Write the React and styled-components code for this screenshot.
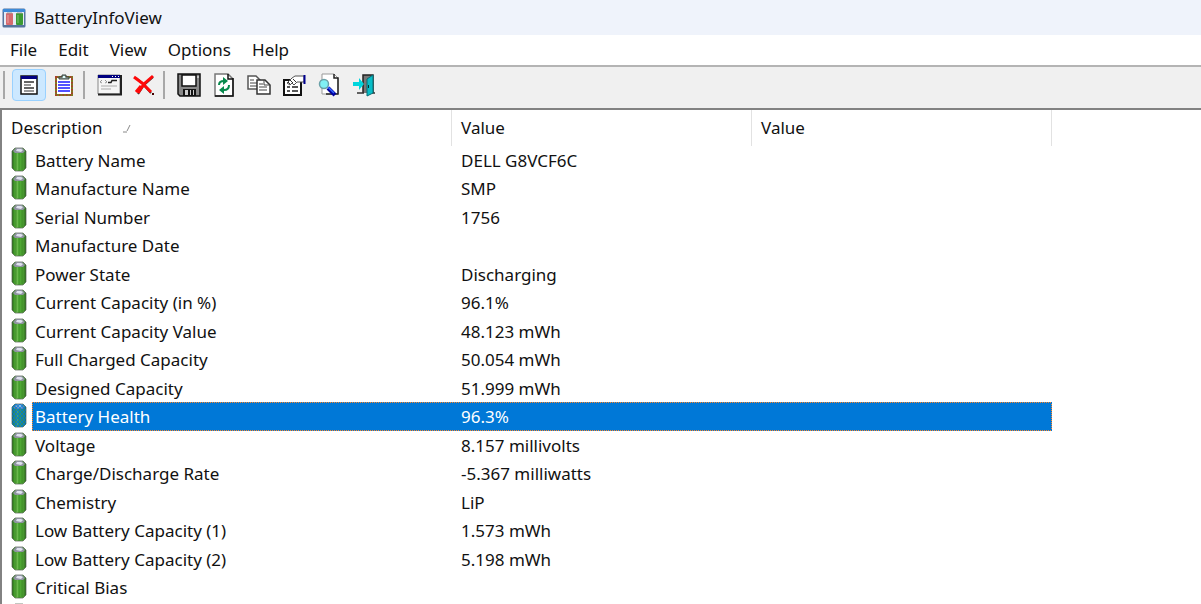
import React from "react";
import styled, { createGlobalStyle, css } from "styled-components";

const rows = [
  ["Battery Name", "DELL G8VCF6C"],
  ["Manufacture Name", "SMP"],
  ["Serial Number", "1756"],
  ["Manufacture Date", ""],
  ["Power State", "Discharging"],
  ["Current Capacity (in %)", "96.1%"],
  ["Current Capacity Value", "48.123 mWh"],
  ["Full Charged Capacity", "50.054 mWh"],
  ["Designed Capacity", "51.999 mWh"],
  ["Battery Health", "96.3%"],
  ["Voltage", "8.157 millivolts"],
  ["Charge/Discharge Rate", "-5.367 milliwatts"],
  ["Chemistry", "LiP"],
  ["Low Battery Capacity (1)", "1.573 mWh"],
  ["Low Battery Capacity (2)", "5.198 mWh"],
  ["Critical Bias", ""],
  ["", ""],
];

const selected = "Battery Health";

const GlobalStyle = createGlobalStyle`
  * {
    box-sizing: border-box;
  }
  body {
    margin: 0;
    overflow: hidden;
    background: #fff;
    color: #111;
    font-family: "Noto Sans", "Open Sans", sans-serif;
    font-size: 17px;
  }
`;

const BatteryIcon = ({ active }) => (
  <svg width="16" height="25" viewBox="0 0 16 25" aria-hidden="true">
    <defs>
      <linearGradient id="cell">
        <stop offset="0" stopColor="#2c6a1c" />
        <stop offset="0.15" stopColor="#3d9426" />
        <stop offset="0.35" stopColor="#7cc75c" />
        <stop offset="0.5" stopColor="#3f9a28" />
        <stop offset="0.7" stopColor="#5cb43e" />
        <stop offset="1" stopColor="#2c6a1c" />
      </linearGradient>
      <pattern id="dither" width="4" height="4" patternUnits="userSpaceOnUse">
        <path d="M0 0h2v2H0zM2 2h2v2H2z" fill="#0078d7" />
      </pattern>
    </defs>
    <path d="M1 4l3-3h8l3 3v17l-3 3H4l-3-3z" fill="url(#cell)" stroke="#52604e" strokeWidth="0.700" />
    <path d="M5 5v18M11 5v18" stroke="#2d7a1a" strokeWidth="0.800" />
    <path d="M2 4l3-3h6l3 3-2 2H4z" fill="#8f93a0" />
    <path d="M5 4l1-2h4l2 1-2 2z" fill="#dfe1ee" />
    {active && (
      <>
        <path d="M1 4l3-3h8l3 3v17l-3 3H4l-3-3z" fill="#0078d7" opacity="0.4" />
        <path d="M1 4l3-3h8l3 3v17l-3 3H4l-3-3z" fill="url(#dither)" opacity="0.7" />
      </>
    )}
  </svg>
);

const AppIcon = () => (
  <svg width="24" height="20" viewBox="0 0 24 20" aria-hidden="true">
    <rect x="0.500" y="0.500" width="23" height="19" rx="1.500" fill="#56749e" />
    <path d="M1 1h22v3H1z" fill="#3d8ad8" />
    <path d="M2 4h20v13H2z" fill="#e6ecf6" />
    <rect x="4" y="5" width="7" height="12" rx="1" fill="#d66a6e" />
    <rect x="14" y="5" width="7" height="12" rx="1" fill="#3b9a32" />
    <path d="M5 5h5M15 5h5" stroke="#999" />
    <path d="M6 7v8" stroke="#eda0a0" />
    <path d="M16 7v8" stroke="#7cc670" />
  </svg>
);

const PropertiesIcon = () => (
  <svg width="18" height="20" viewBox="0 0 18 20" aria-hidden="true">
    <path d="M1 1h16v18H1z" fill="#fff" stroke="#111" strokeWidth="1.500" />
    <path d="M1 1h16v3H1z" fill="#000080" />
    <path d="M4 7h10M4 13h10" stroke="#333" strokeWidth="1.500" />
    <path d="M4 10h7M4 16h10" stroke="#777" strokeWidth="1.500" />
  </svg>
);

const ClipboardIcon = () => (
  <svg width="20" height="22" viewBox="0 0 20 22" aria-hidden="true">
    <path d="M2 3h16v18H2z" fill="#fff" stroke="#7d7a20" strokeWidth="2" />
    <path d="M2 3h16v18H2z" fill="none" stroke="#a8402c" strokeWidth="2" strokeDasharray="1.500 2" />
    <path d="M4 8h12M4 11h12M4 14h12M4 17h12" stroke="#1818ff" strokeWidth="1.500" />
    <path d="M5 5V3h3V1h4v2h3v2z" fill="#9ba9a3" stroke="#37443f" />
    <path d="M9 2h2v2H9z" fill="#dfffff" />
  </svg>
);

const WindowIcon = () => (
  <svg width="25" height="22" viewBox="0 0 25 22" aria-hidden="true">
    <path d="M1 1h22v19H1z" fill="#f6f6f6" stroke="#888" />
    <path d="M1 20.500h23V1" fill="none" stroke="#222" strokeWidth="2" />
    <path d="M1 1h22v3H1z" fill="#000080" />
    <path d="M15 2.500h1M18 2.500h1M21 2.500h1" stroke="#fff" />
    <path d="M5 6L3 8l2 1M8 6l2 2-2 1" fill="none" stroke="#999" />
    <path d="M20 6.500h-5l-1 2h-3" fill="none" stroke="#222" strokeWidth="1.500" />
    <path d="M4 12h16M4 15h10" stroke="#aaa" />
  </svg>
);

const DeleteIcon = () => (
  <svg width="22" height="22" viewBox="0 0 22 22" aria-hidden="true">
    <path d="M3 4l7 6 8 9M20 3l-9 8-6 9" fill="none" stroke="#333" strokeWidth="2" />
    <path d="M1 3l8 6 9 9M20 2l-9 8-6 9" fill="none" stroke="#ff0808" strokeWidth="3" />
    <path d="M3 18l5-6" stroke="#ff0808" strokeWidth="3" />
    <path d="M19 19h2v2h-2z" fill="#400" />
  </svg>
);

const SaveIcon = () => (
  <svg width="24" height="24" viewBox="0 0 24 24" aria-hidden="true">
    <path d="M1 1h22v22H3l-2-2z" fill="#888" stroke="#111" strokeWidth="1.500" />
    <path d="M5 2h14v11H5z" fill="#fff" stroke="#111" strokeWidth="1.500" />
    <path d="M6 16h13v7H6z" fill="#111" />
    <path d="M8 17h3v5H8zM13 17h1v5h-1zM16 17h1v5h-1z" fill="#ccc" />
    <path d="M20.500 3h1v2h-1z" fill="#fff" />
  </svg>
);

const RefreshIcon = () => (
  <svg width="20" height="24" viewBox="0 0 20 24" aria-hidden="true">
    <path d="M1 1h13l5 5v17H1z" fill="#fff" stroke="#777" strokeWidth="1.500" />
    <path d="M14 1v5h5M19 5v18H1" fill="none" stroke="#111" strokeWidth="1.500" />
    <path d="M5 12c0-3 2-4 5-4M15 12c0 3-2 5-5 5" fill="none" stroke="#078a4d" strokeWidth="2" />
    <path d="M9 4l5 4-5 4zM10 13l-5 4 5 4z" fill="#078a4d" />
  </svg>
);

const CopyIcon = () => (
  <svg width="24" height="20" viewBox="0 0 24 20" aria-hidden="true">
    <path d="M1 1h8l4 4v9H1z" fill="#fff" stroke="#555" strokeWidth="1.500" />
    <path d="M3 5h4M3 8h7M3 11h7" stroke="#444" />
    <path d="M10 5h8l5 5v9H10z" fill="#fff" stroke="#333" strokeWidth="1.500" />
    <path d="M17 5v5h6M12 9h4M12 12h8M12 15h8" fill="none" stroke="#444" />
  </svg>
);

const OptionsIcon = () => (
  <svg width="24" height="22" viewBox="0 0 24 22" aria-hidden="true">
    <path d="M2 6h17v15H2z" fill="#fff" stroke="#111" strokeWidth="2" />
    <path d="M5 13h3M5 17h3M10 13h6M10 17h6" stroke="#222" strokeWidth="1.500" />
    <path d="M5 9l5-5 3-2h9v6h-7l-3 3-2-2-2 2z" fill="#fff" stroke="#555" />
    <path d="M6 8l2 2M8 6l3 3M11 5l3 3" stroke="#333" />
    <path d="M22.500 1v9" stroke="#000090" strokeWidth="2" />
  </svg>
);

const FindIcon = () => (
  <svg width="22" height="24" viewBox="0 0 22 24" aria-hidden="true">
    <path d="M4 1h12l4 4v16H4z" fill="#fff" stroke="#999" />
    <path d="M16 1v4h4v16H8" fill="none" stroke="#222" strokeWidth="1.500" />
    <circle cx="6" cy="11" r="4.500" fill="#80f0f5" stroke="#6aa0a8" strokeWidth="1.500" />
    <path d="M10 15l7 7" stroke="#0000a0" strokeWidth="4" />
    <path d="M10 14l6 6" stroke="#3568ff" strokeWidth="1.500" />
  </svg>
);

const ExitIcon = () => (
  <svg width="24" height="24" viewBox="0 0 24 24" aria-hidden="true">
    <path d="M11 20V2h10v18" fill="#777" stroke="#222" strokeWidth="1.500" />
    <path d="M5 20h7M20 20h3" stroke="#333" strokeWidth="1.500" />
    <path d="M21 2v18l-6 3V6z" fill="#08bec8" stroke="#076e76" />
    <path d="M16.500 12v3" stroke="#033" />
    <path d="M1 9h6V5l5 6-5 6v-4H1z" fill="#00d5dc" />
  </svg>
);

const tools = [
  [
    ["Properties", PropertiesIcon, true],
    ["Copy report", ClipboardIcon],
  ],
  [
    ["Window", WindowIcon],
    ["Delete", DeleteIcon],
  ],
  [
    ["Save", SaveIcon],
    ["Refresh", RefreshIcon],
    ["Copy", CopyIcon],
    ["Options", OptionsIcon],
    ["Find", FindIcon],
    ["Exit", ExitIcon],
  ],
];

const App = () => {
  return (
    <Window>
      <GlobalStyle />
      <TitleBar>
        <AppIcon />
        <span>BatteryInfoView</span>
      </TitleBar>
      <MenuBar>
        {["File", "Edit", "View", "Options", "Help"].map((m) => (
          <MenuButton key={m}>{m}</MenuButton>
        ))}
      </MenuBar>
      <ToolBar>
        {tools.map((group, i) => (
          <ToolGroup key={i}>
            {group.map(([name, Icon, on]) => (
              <ToolButton key={name} aria-label={name} $on={on}>
                <Icon />
              </ToolButton>
            ))}
          </ToolGroup>
        ))}
      </ToolBar>
      <ListView>
        <Table>
          <colgroup>
            <Col $width="30px" />
            <Col $width="420px" />
            <Col $width="300px" />
            <Col $width="300px" />
            <Col />
          </colgroup>
          <thead>
            <tr>
              <HeadCell colSpan={2}>
                Description
                <SortMark width="8" height="8" viewBox="0 0 8 8">
                  <path d="M0 7h4M4 6l3-6" fill="none" stroke="#888" />
                </SortMark>
              </HeadCell>
              <HeadCell>Value</HeadCell>
              <HeadCell>Value</HeadCell>
              <HeadCell $last />
            </tr>
          </thead>
          <tbody>
            {rows.map(([name, value]) => (
              <Row key={name} $selected={name === selected}>
                <IconCell>
                  <BatteryIcon active={name === selected} />
                </IconCell>
                <NameCell>{name}</NameCell>
                <Cell>{value}</Cell>
                <Cell />
                <td />
              </Row>
            ))}
          </tbody>
        </Table>
      </ListView>
    </Window>
  );
};

const Window = styled.div`
  height: 100vh;
  display: flex;
  flex-direction: column;
  overflow: hidden;
`;

const TitleBar = styled.header`
  flex: none;
  height: 35px;
  display: flex;
  align-items: center;
  gap: 8px;
  padding: 0 2px;
  background: #eff3fb;
`;

const MenuBar = styled.nav`
  flex: none;
  height: 30px;
  display: flex;
  align-items: center;
  gap: 21px;
  padding: 0 10px 2px;
`;

const MenuButton = styled.button`
  padding: 0;
  border: 0;
  background: none;
  color: inherit;
  font: inherit;
`;

const ToolBar = styled.div`
  flex: none;
  height: 43px;
  display: flex;
  align-items: center;
  padding: 0 3px 6px;
  border-top: 2px solid #b4b4b4;
  background: #f0f0f0;
`;

const ToolGroup = styled.div`
  height: 28px;
  display: flex;
  align-items: center;
  gap: 1px;
  padding: 0 2px 0 7px;
  border-left: 2px solid #a8a8a8;
`;

const ToolButton = styled.button`
  width: 34px;
  height: 32px;
  display: flex;
  align-items: center;
  justify-content: center;
  padding: 0;
  border: 1px solid ${(props) => (props.$on ? "#99d1ff" : "transparent")};
  border-radius: 4px;
  background: ${(props) => (props.$on ? "#cce8ff" : "none")};
`;

const ListView = styled.main`
  flex: 1;
  min-height: 0;
  overflow: hidden;
  border-top: 2px solid #828282;
  border-left: 2px solid #828282;
`;

const Table = styled.table`
  width: 100%;
  table-layout: fixed;
  border-collapse: separate;
  border-spacing: 0;
  line-height: 24px;
  white-space: nowrap;

  td,
  th {
    padding: 0;
  }
`;

const Col = styled.col`
  width: ${(props) => props.$width || "auto"};
`;

const HeadCell = styled.th`
  && {
    height: 36px;
    padding-left: 9px;
    font-weight: 400;
    text-align: left;
    border-right: ${(props) => (props.$last ? "0" : "1px solid #e2e2e2")};
  }
`;

const SortMark = styled.svg`
  margin-left: 21px;
  vertical-align: 1px;
`;

const IconCell = styled.td`
  && {
    padding: 1px 0 0 9px;
    vertical-align: top;
  }
  svg {
    display: block;
  }
`;

const NameCell = styled.td`
  && {
    padding: 1px 0 0 3px;
  }
`;

const Cell = styled.td`
  && {
    padding: 1px 0 0 9px;
  }
`;

const dotsX = "repeating-linear-gradient(90deg, #ff8728 0 1px, #0078d7 1px 2px)";
const dotsY = "repeating-linear-gradient(#ff8728 0 1px, #0078d7 1px 2px)";

// dotted focus frame round the whole selected row, icon left out
const Row = styled.tr`
  height: 28px;

  &:nth-child(even) {
    height: 29px;
  }

  ${(props) =>
    props.$selected &&
    css`
      color: #fff;

      ${NameCell}, ${Cell} {
        background:
          ${dotsX} top / 100% 1px no-repeat,
          ${dotsX} bottom / 100% 1px no-repeat,
          #0078d7;
      }
      ${NameCell} {
        background:
          ${dotsX} top / 100% 1px no-repeat,
          ${dotsX} bottom / 100% 1px no-repeat,
          ${dotsY} left / 1px 100% no-repeat,
          #0078d7;
      }
      ${Cell}:nth-child(4) {
        background:
          ${dotsX} top / 100% 1px no-repeat,
          ${dotsX} bottom / 100% 1px no-repeat,
          ${dotsY} right / 1px 100% no-repeat,
          #0078d7;
      }
    `}
`;

export default App;
